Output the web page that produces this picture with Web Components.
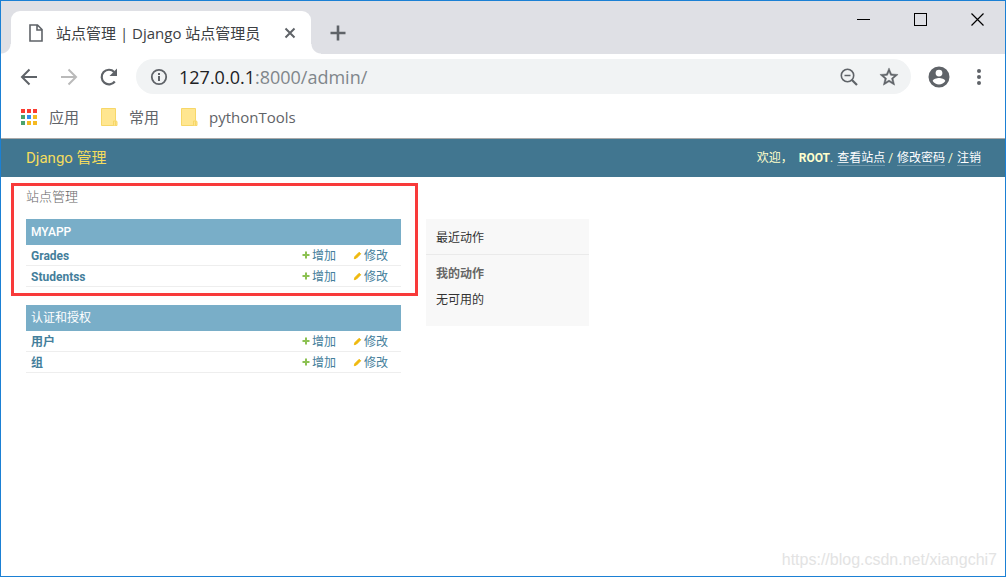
<!DOCTYPE html>
<html lang="zh-CN">
<head>
<meta charset="utf-8">
<meta name="viewport" content="width=device-width, initial-scale=1">
<title>站点管理 | Django 站点管理员</title>
<style>
  html { height: 100%; }
  body { margin: 0; min-height: 100%; display: flex; font-family: Roboto, "Noto Sans CJK SC", sans-serif; }
  browser-window { flex: 1; min-width: 0; }
</style>
</head>
<body>
<browser-window>
  <tab-strip slot="chrome">站点管理 | Django 站点管理员</tab-strip>
  <nav-toolbar slot="chrome" site="127.0.0.1" path=":8000/admin/"></nav-toolbar>
  <bookmark-bar slot="chrome">
    <bookmark-item icon="apps">应用</bookmark-item>
    <bookmark-item icon="folder">常用</bookmark-item>
    <bookmark-item icon="folder">pythonTools</bookmark-item>
  </bookmark-bar>
  <admin-page>
    <admin-header slot="header" user="ROOT">Django 管理</admin-header>
    <marked-area>
      <page-title>站点管理</page-title>
      <app-module lang="en" caption="MYAPP" models="Grades,Studentss"></app-module>
    </marked-area>
    <app-module caption="认证和授权" models="用户,组"></app-module>
    <recent-actions slot="related"></recent-actions>
  </admin-page>
  <water-mark slot="overlay">https://blog.csdn.net/xiangchi7</water-mark>
</browser-window>

<script>
const BASE = `:host, *, *::before, *::after { box-sizing: border-box; }
  button { font: inherit; margin: 0; padding: 0; border: 0; background: none; color: inherit; display: grid; place-items: center; cursor: pointer; }
  a { color: inherit; text-decoration: none; }
  svg { display: block; }`;

function define(name, css, html) {
  customElements.define(name, class extends HTMLElement {
    constructor() {
      super();
      const root = this.attachShadow({ mode: 'open' });
      root.innerHTML = `<style>${BASE}${css}</style>${typeof html === 'function' ? html(this) : html}`;
    }
  });
}

define('browser-window', `
  :host { display: flex; flex-direction: column; position: relative; background: #fff; border: 1px solid #1b80d4; }
  `, `<slot name="chrome"></slot><slot></slot><slot name="overlay"></slot>`);

define('tab-strip', `
  :host { display: flex; align-items: stretch; height: 53px; padding: 10px 0 0 10px; background: #dfe0e5; color: #3c4043; font: 15px/20px "Open Sans", "Noto Sans CJK SC", sans-serif; }
  .tab { position: relative; display: flex; align-items: center; flex: 0 1 300px; min-width: 0; padding: 0 12px 0 17px; background: #fff; border-radius: 9px 9px 0 0; }
  .tab::before, .tab::after { content: ""; position: absolute; bottom: 0; width: 10px; height: 10px; }
  .tab::before { right: 100%; background: radial-gradient(circle at 0 0, transparent 9px, #fff 10px); }
  .tab::after { left: 100%; background: radial-gradient(circle at 100% 0, transparent 9px, #fff 10px); }
  .title { flex: 1; min-width: 0; margin-left: 12px; white-space: nowrap; overflow: hidden; }
  .close { width: 18px; height: 18px; }
  .new { width: 18px; margin-left: 18px; }
  .win { display: flex; margin-left: auto; height: 20px; margin-top: -2px; gap: 28px; padding-right: 13px; }
  .win button { width: 29px; height: 20px; }
  `, `
  <div class="tab">
    <svg width="16" height="20" viewBox="0 0 16 20" fill="none" stroke="#5f6368" stroke-width="1.6"><path d="M2 2h7.5l4.500 4.500V18H2zM9 2v5h5"/></svg>
    <span class="title"><slot></slot></span>
    <button class="close" aria-label="关闭标签页"><svg width="12" height="12" viewBox="0 0 12 12" stroke="#5f6368" stroke-width="2"><path d="M1.500 1.500l9 9M10.500 1.500l-9 9"/></svg></button>
  </div>
  <button class="new" aria-label="新标签页"><svg width="16" height="16" viewBox="0 0 16 16" stroke="#5f6368" stroke-width="2.600"><path d="M8 .5v15M.5 8h15"/></svg></button>
  <div class="win">
    <button aria-label="最小化"><svg width="13" height="13" shape-rendering="crispEdges"><path d="M0 6.500h13" stroke="#000"/></svg></button>
    <button aria-label="最大化"><svg width="13" height="13" shape-rendering="crispEdges"><rect x=".5" y=".5" width="12" height="12" fill="none" stroke="#000"/></svg></button>
    <button aria-label="关闭"><svg width="13" height="13"><path d="M.5.5l12 12M12.500.5l-12 12" stroke="#000" stroke-width="1.200"/></svg></button>
  </div>`);

define('nav-toolbar', `
  :host { display: flex; align-items: center; height: 45px; padding: 0 18px; color: #5f6368; }
  .nav { display: flex; gap: 20px; flex: none; }
  .nav button { width: 20px; height: 20px; }
  .box { flex: 1; min-width: 0; display: flex; align-items: center; height: 35px; margin: 0 16px 0 17px; padding: 0 12px 0 14px; border-radius: 18px; background: #f1f3f4; font: 18px/24px "Open Sans", "Noto Sans CJK SC", sans-serif; }
  .box svg { flex: none; }
  label { margin-left: 11px; color: #202124; }
  input { flex: 1; min-width: 0; margin: 0; padding: 0; border: 0; outline: 0; background: none; font: inherit; color: #80868b; }
  .tail { display: flex; gap: 20px; }
  .me { display: grid; grid-auto-flow: column; gap: 20px; align-items: center; }
  `, el => `
  <div class="nav">
    <button aria-label="后退"><svg width="18" height="18" viewBox="0 0 18 18" fill="none" stroke="#5f6368" stroke-width="2"><path d="M17 9H2.500M9.500 1.500L2 9l7.500 7.500"/></svg></button>
    <button aria-label="前进"><svg width="18" height="18" viewBox="0 0 18 18" fill="none" stroke="#bababa" stroke-width="2"><path d="M1 9h14.500M8.500 1.500L16 9l-7.500 7.500"/></svg></button>
    <button aria-label="重新加载"><svg width="20" height="20" viewBox="0 0 20 20"><path d="M15.800 14.500A7.300 7.300 0 1 1 15.200 4.900" fill="none" stroke="#5f6368" stroke-width="2.200"/><path d="M18 1.500V9h-7.500z" fill="#5f6368"/></svg></button>
  </div>
  <div class="box">
    <svg width="18" height="18" viewBox="0 0 18 18"><circle cx="9" cy="9" r="7.200" fill="none" stroke="#5f6368" stroke-width="1.800"/><path d="M9 8v5M9 5v2" stroke="#5f6368" stroke-width="2"/></svg>
    <label for="url">${el.getAttribute('site')}</label><input id="url" type="text" spellcheck="false" value="${el.getAttribute('path')}">
    <div class="tail">
      <button aria-label="缩放"><svg width="20" height="20" viewBox="0 0 20 20" fill="none" stroke="#5f6368"><circle cx="8.500" cy="8.500" r="6.200" stroke-width="1.600"/><path d="M5.500 8.500h6" stroke-width="1.500"/><path d="M13 13l5 5" stroke-width="2.200"/></svg></button>
      <button aria-label="收藏"><svg width="20" height="20" viewBox="1 1 22 22" fill="#5f6368"><path d="M22 9.240l-7.190-.62L12 2 9.190 8.630 2 9.240l5.460 4.730L5.820 21 12 17.270 18.180 21l-1.630-7.030L22 9.240zM12 15.400l-3.760 2.270 1-4.280-3.320-2.880 4.380-.38L12 6.100l1.710 4.040 4.380.38-3.320 2.880 1 4.280L12 15.400z" stroke="#5f6368" stroke-width=".5"/></svg></button>
    </div>
  </div>
  <div class="me">
    <button aria-label="用户"><svg width="24" height="24" viewBox="0 0 24 24" fill="#5f6368"><path d="M12 1.500a10.500 10.500 0 1 0 0 21 10.500 10.500 0 0 0 0-21zm0 3.200a3.400 3.400 0 1 1 0 6.800 3.400 3.400 0 0 1 0-6.800zm0 14.800a7.600 7.600 0 0 1-6.300-3.400c0-2.100 4.200-3.200 6.300-3.200s6.300 1.100 6.300 3.200a7.600 7.600 0 0 1-6.300 3.400z"/></svg></button>
    <button aria-label="菜单"><svg width="16" height="18" viewBox="0 0 16 18" fill="#5f6368"><circle cx="8" cy="3" r="2"/><circle cx="8" cy="9" r="2"/><circle cx="8" cy="15" r="2"/></svg></button>
  </div>`);

define('bookmark-bar', `
  :host { display: flex; align-items: center; gap: 21px; height: 40px; padding: 0 19px 3px; border-bottom: 1px solid #a9a9a9; }
  `, `<slot></slot>`);

const APP_COLORS = ['#fb3b30', '#fb3b30', '#fb3b30', '#4aa36c', '#2f8df0', '#f5b921', '#4aa36c', '#f5b921', '#f5b921'];
const ICONS = {
  apps: `<svg width="18" height="18" viewBox="0 0 18 18" shape-rendering="crispEdges">${APP_COLORS.map((c, i) => `<rect x="${i % 3 * 6 + 1}" y="${Math.floor(i / 3) * 6 + 1}" width="4" height="4" fill="${c}"/>`).join('')}</svg>`,
  folder: `<svg width="18" height="20" viewBox="0 0 18 20"><path d="M1.500 1.500h14v12l1.500 1v4h-15.500z" fill="#ffe690" stroke="#f7d768"/><path d="M13.500 18.500v-4.500h2v4.500" fill="#ffe690" stroke="#f7d768"/></svg>`
};
define('bookmark-item', `
  :host { display: block; color: #5f6368; font: 15px/20px "Open Sans", "Noto Sans CJK SC", sans-serif; }
  a { display: flex; align-items: center; gap: 11px; }
  `, el => `<a href="#">${ICONS[el.getAttribute('icon')]}<span><slot></slot></span></a>`);

define('admin-page', `
  :host { display: block; flex: 1; }
  .content { display: grid; grid-template-columns: minmax(0, 375px) minmax(0, 163px); gap: 25px; padding: 10px 25px; }
  .related { padding-top: 32px; }
  `, `<slot name="header"></slot><div class="content"><main><slot></slot></main><div class="related"><slot name="related"></slot></div></div>`);

define('admin-header', `
  :host { display: flex; align-items: center; justify-content: space-between; height: 38px; padding: 0 24px 0 25px; background: #417690; color: #ffc; font-size: 12px; line-height: 14px; }
  h1 { margin: 0; font-size: 15px; line-height: 20px; font-weight: 400; color: #f5dd5d; }
  strong { margin-left: 3px; }
  .tools a { display: inline-block; margin-left: 1px; color: #fff; border-bottom: 1px solid #7098ab; }
  `, el => `<h1><slot></slot></h1><div class="tools">欢迎， <strong>${el.getAttribute('user')}</strong>. <a href="#">查看站点</a> / <a href="#">修改密码</a> / <a href="#">注销</a></div>`);

define('marked-area', `
  :host { display: block; position: relative; }
  .mark { position: absolute; inset: -4px -17px 9px -15px; border: 3px solid #f83a3a; pointer-events: none; }
  `, `<slot></slot><div class="mark"></div>`);

define('page-title', `
  :host { display: block; margin-bottom: 12px; }
  h1 { margin: 0; font-size: 13px; line-height: 20px; font-weight: 300; color: #666; }
  `, `<h1><slot></slot></h1>`);

define('app-module', `
  :host { display: block; padding-bottom: 18px; font-size: 12px; line-height: 18px; color: #447e9b; }
  table { width: 100%; border-collapse: separate; border-spacing: 0; table-layout: fixed; }
  caption { padding: 0 5px; line-height: 26px; text-align: left; background: #79aec8; color: #fff; font-weight: 400; }
  :host(:lang(en)) caption { font-weight: 500; }
  th, td { padding: 2px 0 0; border-bottom: 1px solid #eee; text-align: left; }
  th { padding-left: 5px; font-weight: 700; }
  .links { width: 107px; }
  .links div { display: flex; gap: 17px; padding-left: 8px; }
  td a { display: flex; align-items: center; gap: 2px; }
  td a svg { flex: none; }
  `, el => `<table><caption>${el.getAttribute('caption')}</caption><tbody>${el.getAttribute('models').split(',').map(m => `
    <tr><th scope="row"><a href="#">${m}</a></th><td class="links"><div>
      <a href="#"><svg width="8" height="10" viewBox="0 0 8 10"><path d="M4 .5v7M.5 4h7" stroke="#8cc152" stroke-width="2"/></svg>增加</a>
      <a href="#"><svg width="9" height="10" viewBox="0 0 9 10"><path d="M1.300 7.700L2 5.500 6.200 1.300l1.500 1.500L3.500 7z" fill="#efb80b" stroke="#efb80b" stroke-linejoin="round"/></svg>修改</a>
    </div></td></tr>`).join('')}</tbody></table>`);

define('recent-actions', `
  :host { display: block; background: #f8f8f8; color: #333; font-size: 12px; line-height: 18px; padding-bottom: 17px; }
  h2, h3, p { margin: 0; padding: 0 10px; font-size: 12px; }
  h2 { padding-top: 10px; padding-bottom: 7px; font-weight: 400; border-bottom: 1px solid #eaeaea; }
  h3 { margin-top: 10px; color: #666; font-weight: 700; }
  p { margin-top: 8px; }
  `, `<h2>最近动作</h2><h3>我的动作</h3><p>无可用的</p>`);

define('water-mark', `
  :host { position: absolute; right: 8px; bottom: 6px; font: 16px/20px "Liberation Sans", sans-serif; color: #e3e3e3; }
  `, `<slot></slot>`);
</script>
</body>
</html>
